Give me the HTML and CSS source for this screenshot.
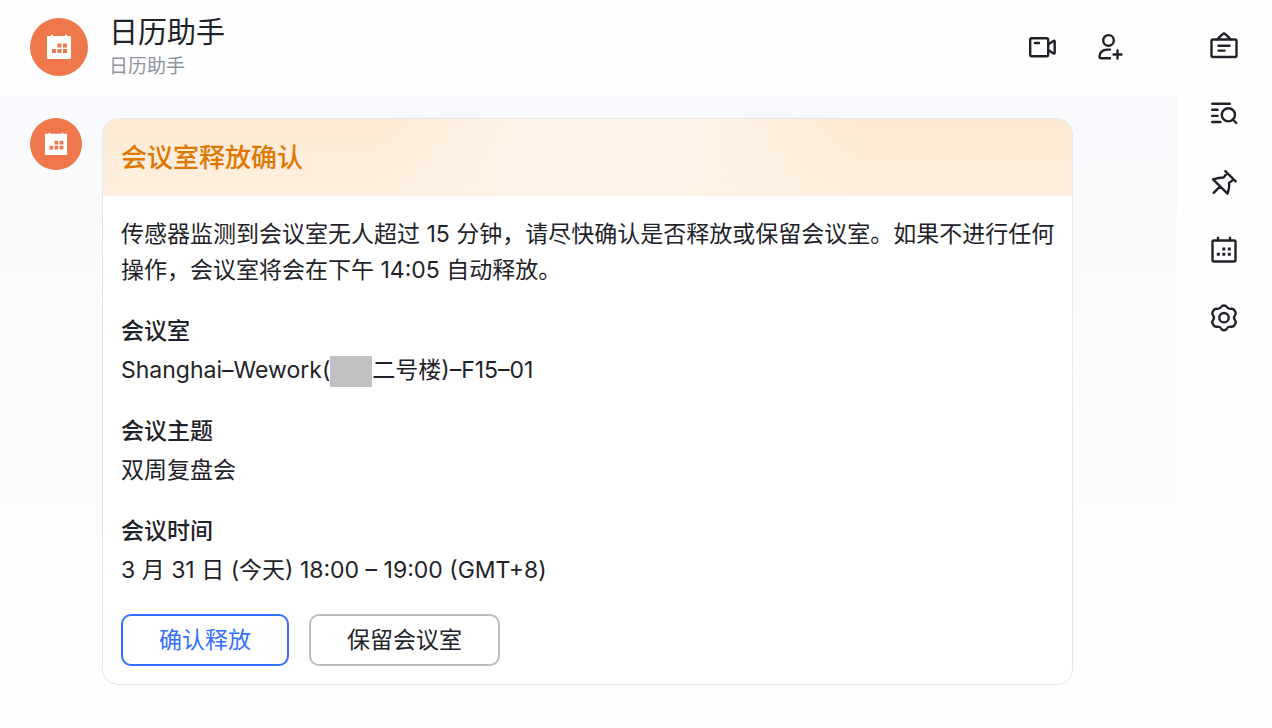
FILE: index.html
```html
<!DOCTYPE html>
<html lang="zh-CN">
<head>
    <meta charset="UTF-8">
    <meta name="viewport" content="width=device-width, initial-scale=1.0">
    <title>日历助手</title>
    <link rel="stylesheet" href="styles.css">
</head>
<body>
    <svg class="symbols" aria-hidden="true">
        <symbol id="calendar-logo" viewBox="0 0 26 26">
            <path fill="#fff" d="M2 2h3V1.500q0-1 1-1t1 1V2h12V1.500q0-1 1-1t1 1V2h3q1 0 1 1v21q0 1-1 1H2q-1 0-1-1V3q0-1 1-1z"/>
            <path fill="#ee784b" d="M11.500 9.500h4v4h-4zM17 9.500h4v4h-4zM6 15h4v4H6zM11.500 15h4v4h-4zM17 15h4v4h-4z"/>
        </symbol>
    </svg>

    <div class="app">
        <main class="chat">
            <header class="chat-header">
                <div class="avatar avatar-large">
                    <svg width="26" height="26"><use href="#calendar-logo"/></svg>
                </div>
                <div class="chat-info">
                    <h1>日历助手</h1>
                    <p>日历助手</p>
                </div>
                <div class="chat-actions">
                    <button type="button" class="icon-btn" aria-label="视频会议">
                        <svg width="32" height="32" viewBox="0 0 32 32">
                            <rect x="4.200" y="7.200" width="18" height="18" rx="1.500"/>
                            <path d="M9 12h4M22.500 13.200l4.900-3.200q1.300-.6 1.300.7v11q0 1.300-1.300.7l-4.900-3.200"/>
                        </svg>
                    </button>
                    <button type="button" class="icon-btn" aria-label="添加成员">
                        <svg width="32" height="32" viewBox="0 0 32 32">
                            <circle cx="14.500" cy="9.400" r="5.300"/>
                            <path d="M16 18.600h-3c-4 0-7.500 2.800-7.500 6.800 0 1.200.6 1.800 1.800 1.800H16M19.500 23.500h8M23.500 19.500v8"/>
                        </svg>
                    </button>
                </div>
            </header>

            <section class="messages">
                <div class="avatar avatar-small">
                    <svg width="24" height="24"><use href="#calendar-logo"/></svg>
                </div>
                <article class="card">
                    <h2 class="card-title">会议室释放确认</h2>
                    <div class="card-body">
                        <p>传感器监测到会议室无人超过 15 分钟，请尽快确认是否释放或保留会议室。如果不进行任何操作，会议室将会在下午 14:05 自动释放。</p>
                        <dl class="details">
                            <div class="detail">
                                <dt>会议室</dt>
                                <dd>Shanghai–Wework(<span class="redacted"></span>二号楼)–F15–01</dd>
                            </div>
                            <div class="detail">
                                <dt>会议主题</dt>
                                <dd>双周复盘会</dd>
                            </div>
                            <div class="detail">
                                <dt>会议时间</dt>
                                <dd>3 月 31 日 (今天) 18:00 – 19:00 (GMT+8)</dd>
                            </div>
                        </dl>
                        <div class="card-actions">
                            <button type="button" class="btn btn-primary">确认释放</button>
                            <button type="button" class="btn">保留会议室</button>
                        </div>
                    </div>
                </article>
            </section>
        </main>

        <aside class="sidebar">
            <button type="button" class="icon-btn" aria-label="群公告">
                <svg width="32" height="32" viewBox="0 0 32 32">
                    <rect x="3.500" y="9.500" width="25" height="17.500" rx="1.500"/>
                    <path d="M9.500 9.200l4.900-4.900q1.600-1.400 3.200 0l4.900 4.900M10.500 15.700h11M10.500 20.600h6"/>
                </svg>
            </button>
            <button type="button" class="icon-btn" aria-label="搜索消息">
                <svg width="32" height="32" viewBox="0 0 32 32">
                    <path d="M4.200 5.800h17.600M4.200 11.800h5.400M4.200 17.900h5.400M4.200 24h8.300M24.800 21.500l3.500 3.500"/>
                    <circle cx="20.400" cy="16.800" r="6.600"/>
                </svg>
            </button>
            <button type="button" class="icon-btn" aria-label="置顶">
                <svg width="32" height="32" viewBox="0 0 32 32">
                    <path d="M17.300 5.200L27.700 15.400M19 7.200l-3.400 4.300Q10.800 11.700 5 13.400L19.500 27.700Q21.700 21.200 21 17l4.800-3.600M12 20.500l-6.300 6.300"/>
                </svg>
            </button>
            <button type="button" class="icon-btn" aria-label="日历">
                <svg width="32" height="32" viewBox="0 0 32 32">
                    <rect x="4.500" y="6.500" width="23" height="21" rx="1.500"/>
                    <path d="M10 3.800v2.500M22 3.800v2.500"/>
                    <path class="dots" d="M14.300 13.500h3v3h-3zM19.800 13.500h3v3h-3zM8.800 18.800h3v3h-3zM14.300 18.800h3v3h-3zM19.800 18.800h3v3h-3z"/>
                </svg>
            </button>
            <button type="button" class="icon-btn" aria-label="设置">
                <svg width="32" height="32" viewBox="0 0 32 32">
                    <path d="M13.300 4.800Q14 3.500 16 3.500T18.700 4.800Q20 7.200 22.700 6.800Q25 6.300 26.200 8L27.500 10.200Q28.300 12 26.900 13.400Q25.100 15.700 26.900 18Q28.300 19.700 27.500 21.400L26.200 23.500Q25 25.200 22.700 24.700Q20 24.300 18.700 26.700Q18 28.200 16 28.200T13.300 26.700Q12 24.300 9.300 24.700Q7 25.200 5.800 23.500L4.500 21.400Q3.700 19.700 5.100 18Q6.900 15.700 5.100 13.400Q3.700 12 4.500 10.200L5.800 8Q7 6.300 9.300 6.800Q12 7.200 13.300 4.800Z"/>
                    <circle cx="16" cy="15.700" r="4.700"/>
                </svg>
            </button>
        </aside>
    </div>
</body>
</html>
```
FILE: styles.css
```css
* {
    box-sizing: border-box;
}

body {
    margin: 0;
    background-color: #fefefe;
    color: #1f2329;
    font-family: Inter, "Noto Sans CJK SC", sans-serif;
    font-size: 23px;
    line-height: 36px;
}

h1, h2, p, dl, dd {
    margin: 0;
}

.symbols {
    display: none;
}

.app {
    display: flex;
    min-height: 100vh;
}

.chat {
    flex: 1;
    display: flex;
    flex-direction: column;
}

.chat-header {
    display: flex;
    align-items: center;
    height: 96px;
    padding: 0 51px 2px 30px;
}

.avatar {
    display: flex;
    flex-shrink: 0;
    align-items: center;
    justify-content: center;
    border-radius: 50%;
    background-color: #ee784b;
}

.avatar-large {
    width: 58px;
    height: 58px;
}

.avatar-small {
    width: 52px;
    height: 52px;
}

.chat-info {
    flex: 1;
    margin-left: 21px;
}

.chat-info h1 {
    font-size: 29px;
    font-weight: 400;
    line-height: 40px;
}

.chat-info p {
    color: #8f959e;
    font-size: 19px;
    line-height: 28px;
}

.chat-actions {
    display: flex;
    gap: 36px;
}

.icon-btn {
    width: 32px;
    height: 32px;
    padding: 0;
    border: none;
    background: none;
    cursor: pointer;
}

.icon-btn svg {
    display: block;
    fill: none;
    stroke: #1f2329;
    stroke-width: 2.4;
    stroke-linecap: round;
    stroke-linejoin: round;
}

.icon-btn .dots {
    fill: #1f2329;
    stroke: none;
}

.messages {
    flex: 1;
    display: flex;
    align-items: flex-start;
    gap: 20px;
    padding: 22px 104px 43px 30px;
    background: linear-gradient(#f8f9fc, #fafbfb 40%, #fefefe 85%);
}

.card {
    flex: 1;
    overflow: hidden;
    border: 1px solid #e4e6e9;
    border-radius: 16px;
    background-color: #fff;
}

.card-title {
    padding: 21px 18px 20px;
    background:
        linear-gradient(rgba(255, 243, 230, 0), rgba(255, 243, 230, 0.6)),
        linear-gradient(100deg, #fdead4 28%, #fef3e8 43%, #fef3e8 60%, #fde9d1 78%);
    color: #de7802;
    font-size: 26px;
    font-weight: 500;
    line-height: 36px;
}

.card-body {
    padding: 20px 12px 18px 18px;
}

.details {
    display: flex;
    flex-direction: column;
    gap: 25px;
    margin: 25px 0 26px;
}

.detail {
    display: flex;
    flex-direction: column;
    gap: 3px;
}

.detail dt {
    font-weight: 500;
}

.redacted {
    display: inline-block;
    width: 42px;
    height: 31px;
    background-color: #c1c1c3;
    vertical-align: middle;
}

.card-actions {
    display: flex;
    gap: 20px;
}

.btn {
    height: 52px;
    padding: 0 36px;
    border: 2px solid #bbbfc4;
    border-radius: 10px;
    background-color: #fff;
    color: #1f2329;
    font: inherit;
    cursor: pointer;
}

.btn-primary {
    border-color: #3370ff;
    color: #3370ff;
}

.sidebar {
    display: flex;
    flex-direction: column;
    align-items: center;
    gap: 36px;
    width: 95px;
    padding: 30px 2px 0 0;
}
```
